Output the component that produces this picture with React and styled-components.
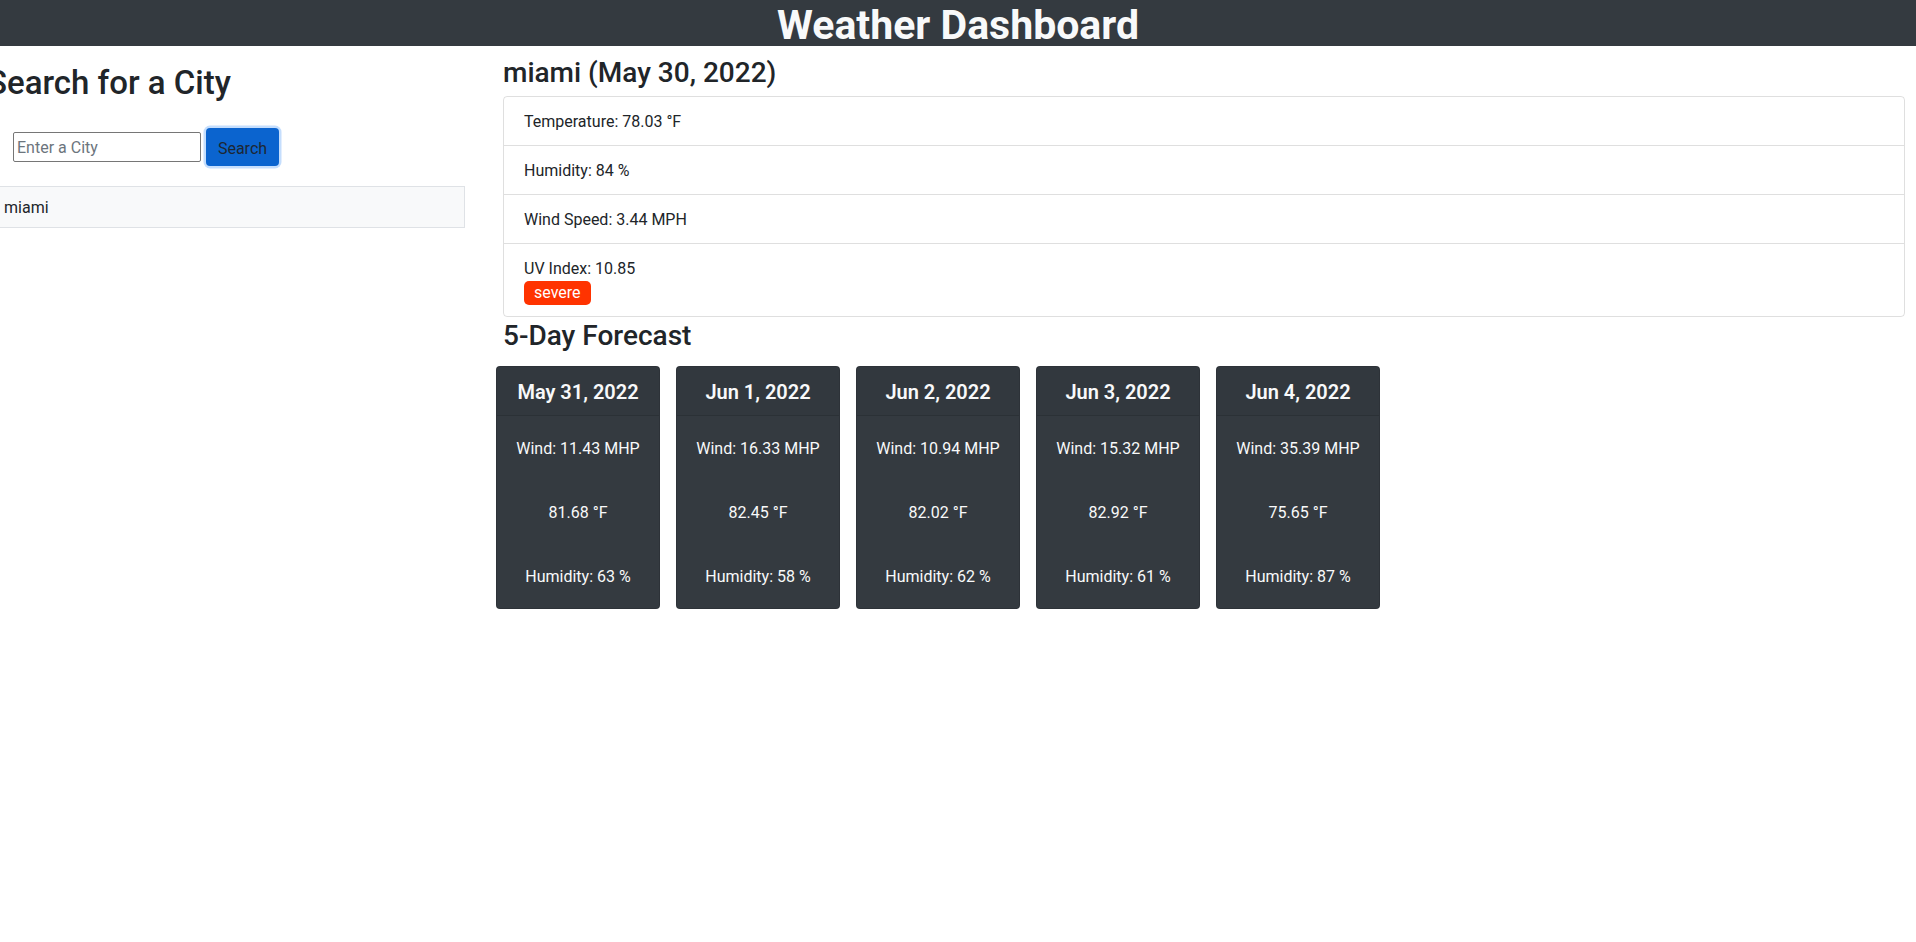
import React from "react";
import styled, { createGlobalStyle } from "styled-components";

const GlobalStyle = createGlobalStyle`
  html, body {
    margin: 0;
    padding: 0;
    background: #ffffff;
  }
  body {
    font-family: Roboto, "Liberation Sans", Arial, sans-serif;
    font-size: 16px;
    line-height: 24px;
    color: #212529;
    overflow-x: hidden;
  }
  * { box-sizing: border-box; }
`;

const Header = styled.header`
  height: 46px;
  padding-top: 4px;
  background: #343a40;
  display: flex;
  align-items: center;
  justify-content: center;
`;

const Title = styled.h1`
  margin: 0;
  font-size: 41px;
  line-height: 42px;
  font-weight: 700;
  color: #f8f9fa;
`;

const Main = styled.main`
  display: flex;
  align-items: flex-start;
`;

const Sidebar = styled.aside`
  width: 478px;
  margin-left: -13px;
  padding-top: 18px;
  flex-shrink: 0;
`;

const SidebarTitle = styled.h2`
  margin: 0 0 6px;
  font-size: 33px;
  line-height: 38px;
  font-weight: 500;
`;

const SearchForm = styled.form`
  display: flex;
  align-items: center;
  gap: 5px;
  padding: 20px 0 20px 26px;
`;

const CityInput = styled.input`
  width: 188px;
  height: 30px;
  padding: 1px 3px;
  border: 1px solid #767676;
  border-radius: 2px;
  font-family: inherit;
  font-size: 16px;
  color: #212529;
  &::placeholder {
    color: #6c757d;
  }
`;

const SearchButton = styled.button`
  width: 73px;
  height: 38px;
  padding: 2px 0 0;
  border: none;
  border-radius: 4px;
  background: #0b64cf;
  color: #1d2733;
  font-family: inherit;
  font-size: 16px;
  box-shadow: 0 0 0 2.5px #c5defd;
  cursor: pointer;
`;

const HistoryList = styled.ul`
  list-style: none;
  margin: 0;
  padding: 0;
`;

const HistoryItem = styled.li`
  padding: 9px 16px 7px;
  background: #f8f9fa;
  border: 1px solid #dfe2e6;
  line-height: 24px;
`;

const Content = styled.section`
  flex: 1;
  margin-left: 38px;
  margin-right: 11px;
  padding-top: 8px;
`;

const SectionTitle = styled.h3`
  margin: ${(p) => p.$margin || "0 0 8px"};
  padding-top: ${(p) => p.$shift || "0"};
  font-size: 28px;
  line-height: 1.2;
  font-weight: 500;
`;

const CurrentCard = styled.ul`
  list-style: none;
  margin: 0;
  padding: 0;
  border: 1px solid rgba(0, 0, 0, 0.125);
  border-radius: 4px;
`;

const CurrentRow = styled.li`
  padding: 13px 20px 11px;
  line-height: 24px;
  & + & {
    border-top: 1px solid rgba(0, 0, 0, 0.125);
  }
`;

const Badge = styled.span`
  display: block;
  width: fit-content;
  padding: 0 10px;
  border-radius: 5px;
  background: #ff3300;
  color: #ffffff;
  line-height: 24px;
`;

const ForecastRow = styled.div`
  display: flex;
  gap: 16px;
  margin-left: -7px;
`;

const ForecastCard = styled.article`
  width: 164px;
  background: #343a40;
  color: #f8f9fa;
  border: 1px solid rgba(0, 0, 0, 0.125);
  border-radius: 4px;
  text-align: center;
`;

const ForecastHeader = styled.h5`
  margin: 0;
  padding: 13px 10px 11px;
  font-size: 20px;
  line-height: 24px;
  font-weight: 600;
  background: rgba(0, 0, 0, 0.03);
  border-bottom: 1px solid rgba(0, 0, 0, 0.125);
`;

const ForecastBody = styled.div`
  display: flex;
  flex-direction: column;
  gap: 40px;
  padding: 21px 4px 19px;
`;

const ForecastLine = styled.p`
  margin: 0;
  line-height: 24px;
`;

const forecast = [
  { date: "May 31, 2022", wind: "11.43", temp: "81.68", hum: "63" },
  { date: "Jun 1, 2022", wind: "16.33", temp: "82.45", hum: "58" },
  { date: "Jun 2, 2022", wind: "10.94", temp: "82.02", hum: "62" },
  { date: "Jun 3, 2022", wind: "15.32", temp: "82.92", hum: "61" },
  { date: "Jun 4, 2022", wind: "35.39", temp: "75.65", hum: "87" },
];

export default function App() {
  return (
    <>
      <GlobalStyle />
      <Header>
        <Title>Weather Dashboard</Title>
      </Header>
      <Main>
        <Sidebar>
          <SidebarTitle>Search for a City</SidebarTitle>
          <SearchForm onSubmit={(e) => e.preventDefault()}>
            <CityInput type="text" placeholder="Enter a City" />
            <SearchButton type="submit">Search</SearchButton>
          </SearchForm>
          <HistoryList>
            <HistoryItem>miami</HistoryItem>
          </HistoryList>
        </Sidebar>
        <Content>
          <SectionTitle $shift="2px" $margin="0 0 6px">
            miami (May 30, 2022)
          </SectionTitle>
          <CurrentCard>
            <CurrentRow>Temperature: 78.03 °F</CurrentRow>
            <CurrentRow>Humidity: 84 %</CurrentRow>
            <CurrentRow>Wind Speed: 3.44 MPH</CurrentRow>
            <CurrentRow>
              UV Index: 10.85
              <Badge>severe</Badge>
            </CurrentRow>
          </CurrentCard>
          <SectionTitle $margin="2px 0 14px">5-Day Forecast</SectionTitle>
          <ForecastRow>
            {forecast.map((d) => (
              <ForecastCard key={d.date}>
                <ForecastHeader>{d.date}</ForecastHeader>
                <ForecastBody>
                  <ForecastLine>Wind: {d.wind} MHP</ForecastLine>
                  <ForecastLine>{d.temp} °F</ForecastLine>
                  <ForecastLine>Humidity: {d.hum} %</ForecastLine>
                </ForecastBody>
              </ForecastCard>
            ))}
          </ForecastRow>
        </Content>
      </Main>
    </>
  );
}
